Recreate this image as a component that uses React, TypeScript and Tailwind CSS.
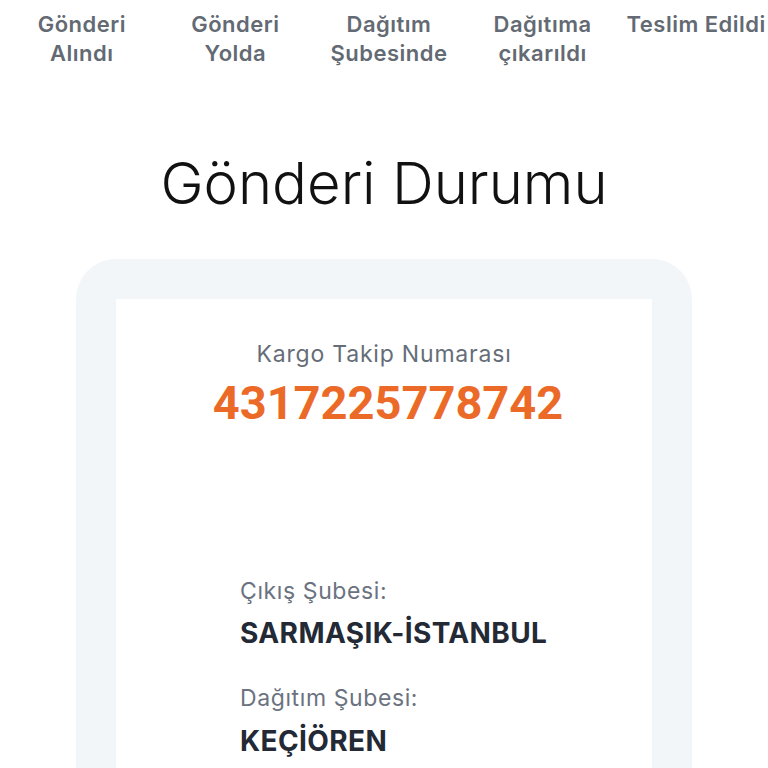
import React from "react";

const steps = [
  ["Gönderi", "Alındı"],
  ["Gönderi", "Yolda"],
  ["Dağıtım", "Şubesinde"],
  ["Dağıtıma", "çıkarıldı"],
  ["Teslim Edildi", ""],
];

export default function App() {
  return (
    <div className="min-h-[768px] bg-white overflow-hidden" style={{ fontFamily: "Inter, 'Noto Sans', sans-serif" }}>
      <div className="grid grid-cols-5 pt-[10px] w-[768px] ml-[5px]">
        {steps.map((s, i) => (
          <div key={i} className="text-center text-[22px] leading-[29px] tracking-[0.5px] font-semibold text-[#636a73] whitespace-nowrap">
            <div>{s[0]}</div>
            {s[1] && <div>{s[1]}</div>}
          </div>
        ))}
      </div>
      <h1 className="mt-[81px] text-center text-[58px] leading-[68px] font-light text-[#111111]">
        Gönderi Durumu
      </h1>
      <div className="mt-[42px] mx-[76px] rounded-t-[40px] bg-[#f3f6f9] px-[40px] pt-[40px] h-[540px]">
        <div className="bg-white h-full">
          <div className="pt-[40px] text-center text-[23px] leading-[30px] tracking-[0.8px] text-[#656d78]">
            Kargo Takip Numarası
          </div>
          <div className="mt-[6px] text-center text-[47px] leading-[56px] font-bold text-[#ec6a28] pl-[8px]" style={{ fontFamily: "Roboto, sans-serif" }}>
            4317225778742
          </div>
          <div className="pl-[124px] mt-[145px]">
            <div className="text-[23px] leading-[30px] tracking-[0.6px] text-[#6b7280]">Çıkış Şubesi:</div>
            <div className="mt-[11px] text-[28px] leading-[32px] tracking-[0.4px] font-bold text-[#232a36]">SARMAŞIK-İSTANBUL</div>
            <div className="mt-[34px] text-[23px] leading-[30px] tracking-[0.6px] text-[#6b7280]">Dağıtım Şubesi:</div>
            <div className="mt-[12px] text-[28px] leading-[32px] tracking-[0.4px] font-bold text-[#232a36]">KEÇİÖREN</div>
          </div>
        </div>
      </div>
    </div>
  );
}
